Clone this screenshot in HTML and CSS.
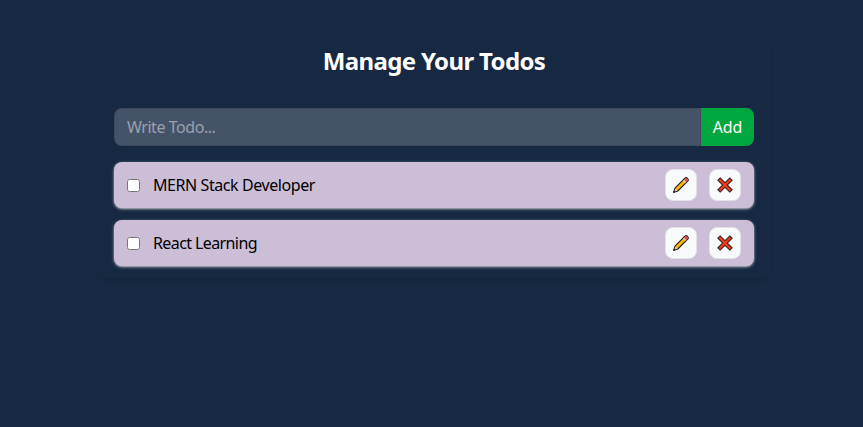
FILE: index.html
```html
<!DOCTYPE html>
<html lang="en">
<head>
<meta charset="utf-8">
<title>Manage Your Todos</title>
<link rel="stylesheet" href="styles.css">
</head>
<body>
<svg width="0" height="0" class="defs" aria-hidden="true">
  <symbol id="pencil" viewBox="0 0 18 18">
    <path d="M1.6 16.4 3 12.2 12.7 2.3Q14.1.9 15.5 2.3 17.1 3.7 15.7 5.2L5.8 15Z" fill="#ffb50b" stroke="#1b1d22" stroke-width="1.1" stroke-linejoin="round"/>
    <path d="M12 3.8 13 2.8Q14.1 1.7 15.1 2.7 16.2 3.7 15.2 4.9L14.2 5.9Z" fill="#e8475b"/>
    <path d="m11.1 4.7.9-.9L14.1 6l-.9.9Z" fill="#c9cdd3"/>
    <path d="m2.4 15.5 1.1-2.8 1.8 1.8Z" fill="#e5c4a3"/>
    <path d="m1.6 16.4.6-1.8 1.2 1.2Z" fill="#1b1d22"/>
  </symbol>
  <symbol id="cross" viewBox="0 0 18 18">
    <path d="M4.2 4.2 13.8 13.8M13.8 4.2 4.2 13.8" stroke="#1b1d22" stroke-width="4.3" stroke-linecap="square"/>
    <path d="M4.2 4.2 13.8 13.8M13.8 4.2 4.2 13.8" stroke="#f03a17" stroke-width="2.4" stroke-linecap="square"/>
  </symbol>
</svg>
<main class="card">
  <h1>Manage Your Todos</h1>
  <form class="add">
    <input class="field" type="text" placeholder="Write Todo...">
    <button class="submit" type="button">Add</button>
  </form>
  <ul class="list">
    <li class="todo">
      <input type="checkbox">
      <span class="label">MERN Stack Developer</span>
      <button class="icon" type="button" aria-label="Edit"><svg><use href="#pencil"/></svg></button>
      <button class="icon" type="button" aria-label="Delete"><svg><use href="#cross"/></svg></button>
    </li>
    <li class="todo">
      <input type="checkbox">
      <span class="label second">React Learning</span>
      <button class="icon" type="button" aria-label="Edit"><svg><use href="#pencil"/></svg></button>
      <button class="icon" type="button" aria-label="Delete"><svg><use href="#cross"/></svg></button>
    </li>
  </ul>
</main>
</body>
</html>
```
FILE: styles.css
```css
* { box-sizing: border-box; }
body {
  margin: 0;
  padding-top: 32px;
  min-height: 427px;
  background: #172842;
  font: 16px/24px "Segoe UI", "Noto Sans", sans-serif;
}
.defs { position: absolute; }
.card {
  width: 672px;
  margin-left: 98px;
  padding: 12px 16px;
  border-radius: 8px;
  box-shadow: 0 3px 5px -2px rgba(0, 0, 0, .12);
}
h1 {
  margin: 0 0 31px;
  padding-top: 1px;
  color: #fff;
  font-size: 24px;
  line-height: 32px;
  font-weight: 700;
  letter-spacing: -.65px;
  text-align: center;
}
.add { display: flex; height: 38px; margin: 0 0 16px; }
.field {
  flex: 1;
  min-width: 0;
  padding: 0 12px;
  border: 1px solid rgba(0, 0, 0, .1);
  border-radius: 8px 0 0 8px;
  background: #455368;
  color: #fff;
  font: inherit;
  letter-spacing: -.45px;
}
.field::placeholder { color: #99a1af; opacity: 1; }
.submit {
  width: 53px;
  padding: 0;
  border: 0;
  border-radius: 0 8px 8px 0;
  background: #00a63e;
  color: #fff;
  font: inherit;
  letter-spacing: -.1px;
}
.list { list-style: none; margin: 0; padding: 0; display: grid; gap: 12px; }
.todo {
  display: flex;
  align-items: center;
  gap: 12px;
  height: 46px;
  padding: 0 13px;
  border-radius: 8px;
  background: #ccbed7;
  color: #000;
  box-shadow: 0 1px 3px rgba(255, 255, 255, .65), 0 1px 2px -1px rgba(255, 255, 255, .6);
}
.todo input { width: 13px; height: 13px; margin: 0 1px 0 0; }
.label { flex: 1; letter-spacing: -.42px; }
.second { letter-spacing: -.6px; }
.icon {
  display: grid;
  place-items: center;
  width: 32px;
  height: 32px;
  padding: 0;
  border: 1px solid #e3e1e8;
  border-radius: 8px;
  background: #f9fafb;
}
.icon svg { width: 18px; height: 18px; }
```
